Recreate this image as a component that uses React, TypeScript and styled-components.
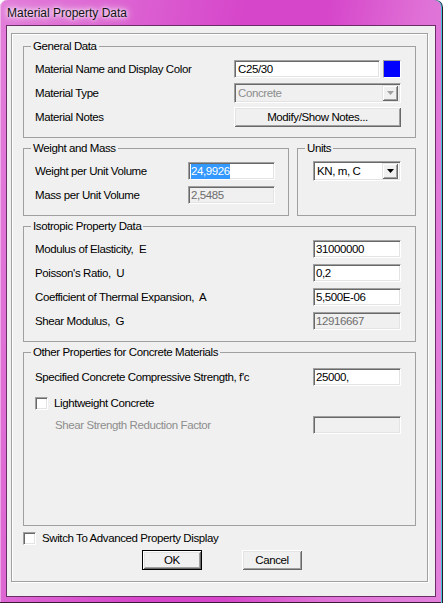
import React from 'react';
import styled, { createGlobalStyle } from 'styled-components';

const GlobalStyle = createGlobalStyle`
  html, body {
    margin: 0;
    padding: 0;
    background: #ffffff;
  }
  body {
    font-family: "Liberation Sans", Arial, sans-serif;
    font-size: 11.5px;
    color: #000;
  }
`;

// window frame
const Window = styled.div`
  width: 443px;
  height: 603px;
  box-sizing: border-box;
  display: flex;
  flex-direction: column;
  border-radius: 7px 7px 0 0;
  overflow: hidden;
  background:
    linear-gradient(100deg, rgba(255, 255, 255, 0.3) 0%, rgba(255, 255, 255, 0.14) 25%, rgba(255, 255, 255, 0) 45%, rgba(255, 255, 255, 0) 60%, rgba(255, 255, 255, 0.24) 78%, rgba(255, 255, 255, 0.32) 100%),
    #d646ca;
  box-shadow: inset -1px 0 0 #2a1a2a, inset -2px 0 0 #46c4d8, inset 0 -1px 0 #3a1a38, inset 1px 0 0 rgba(255, 255, 255, 0.4);
`;

const TitleBar = styled.div`
  height: 25px;
  display: flex;
  align-items: center;
  padding-left: 7px;
  font-size: 12px;
  color: #141414;
`;

const TitleText = styled.span`
  text-shadow: 0 0 6px #fff, 0 0 10px rgba(255, 255, 255, 0.9), 0 0 3px rgba(255, 255, 255, 0.8);
`;

const Client = styled.div`
  flex: 1;
  display: flex;
  margin: 0 7px 6px 6px;
  padding: 7px 7px 14px 4px;
  background: #f0f0f0;
  border: 1px solid #6a2e66;
`;

const Frame = styled.div`
  flex: 1;
  display: flex;
  flex-direction: column;
  padding: 6px 11px 11px 11px;
  border: 1px solid #a0a0a0;
  box-shadow: inset 1px 1px 0 #fff, 1px 1px 0 #fff;
`;

const Groups = styled.div`
  flex: 1;
  display: flex;
  flex-direction: column;
  gap: 4px;
`;

const Group = styled.fieldset<{ $grow?: boolean; $padTop?: number; $padRight?: number; $width?: number }>`
  margin: 0;
  min-width: 0;
  box-sizing: border-box;
  padding: ${p => p.$padTop ?? 4}px ${p => p.$padRight ?? 14}px 8px 11px;
  border: 1px solid #a0a0a0;
  display: flex;
  flex-direction: column;
  ${p => (p.$width ? `width: ${p.$width}px;` : '')}
  ${p => (p.$grow ? 'flex: 1;' : '')}
`;

const Legend = styled.legend`
  margin-left: -4px;
  padding: 0 2px;
  line-height: 13px;
  letter-spacing: -0.4px;
`;

const SplitRow = styled.div`
  display: flex;
  gap: 8px;
`;

const Row = styled.div<{ $end?: boolean }>`
  display: flex;
  align-items: center;
  height: 24px;
  ${p => (p.$end ? 'justify-content: flex-end;' : '')}
`;

const Label = styled.span<{ $disabled?: boolean; $indent?: number }>`
  flex: 1;
  white-space: pre;
  letter-spacing: -0.4px;
  padding-left: ${p => p.$indent ?? 0}px;
  color: ${p => (p.$disabled ? '#8d8d8d' : '#000')};
`;

const Controls = styled.div`
  display: flex;
  align-items: center;
  gap: 3px;
`;

const TextBox = styled.div<{ $width: number; $disabled?: boolean; $pad?: number }>`
  width: ${p => p.$width}px;
  height: 18px;
  box-sizing: border-box;
  display: flex;
  align-items: center;
  padding-left: ${p => p.$pad ?? 2}px;
  background: ${p => (p.$disabled ? '#f0f0f0' : '#fff')};
  color: ${p => (p.$disabled ? '#6d6d6d' : '#000')};
  border-top: 1px solid #a0a0a0;
  border-left: 1px solid #a0a0a0;
  border-right: 1px solid #fff;
  border-bottom: 1px solid #fff;
  box-shadow: inset 1px 1px 0 #696969, inset -1px -1px 0 #e3e3e3;
  letter-spacing: -0.4px;
  white-space: nowrap;
  overflow: hidden;
`;

const Selected = styled.span`
  background: #3399ff;
  color: #fff;
  line-height: 15px;
`;

const Swatch = styled.div`
  width: 18px;
  height: 18px;
  box-sizing: border-box;
  background: #0000ff;
  border-top: 1px solid #a0a0a0;
  border-left: 1px solid #a0a0a0;
  border-right: 1px solid #fff;
  border-bottom: 1px solid #fff;
`;

const Combo = styled.div<{ $width: number; $disabled?: boolean }>`
  width: ${p => p.$width}px;
  height: 20px;
  box-sizing: border-box;
  display: flex;
  align-items: center;
  padding: 2px;
  background: ${p => (p.$disabled ? '#f0f0f0' : '#fff')};
  color: ${p => (p.$disabled ? '#8d8d8d' : '#000')};
  border-top: 1px solid #a0a0a0;
  border-left: 1px solid #a0a0a0;
  border-right: 1px solid #fff;
  border-bottom: 1px solid #fff;
  box-shadow: inset 1px 1px 0 #696969, inset -1px -1px 0 #e3e3e3;
`;

const ComboText = styled.span`
  flex: 1;
  padding-left: 1px;
  letter-spacing: -0.4px;
  white-space: nowrap;
`;

const DropButton = styled.div`
  width: 16px;
  height: 16px;
  box-sizing: border-box;
  display: flex;
  align-items: center;
  justify-content: center;
  background: #f0f0f0;
  box-shadow: inset 1px 1px 0 #e3e3e3, inset -1px -1px 0 #696969, inset 2px 2px 0 #fff, inset -2px -2px 0 #a0a0a0;
`;

const Button = styled.button<{ $width: number; $default?: boolean }>`
  width: ${p => p.$width}px;
  height: 20px;
  box-sizing: border-box;
  margin: 0;
  padding: 0;
  background: #f0f0f0;
  border: ${p => (p.$default ? '1px solid #000' : 'none')};
  box-shadow: inset 1px 1px 0 #fff, inset -1px -1px 0 #696969, inset 2px 2px 0 #e3e3e3, inset -2px -2px 0 #a0a0a0;
  font-family: "Liberation Sans", Arial, sans-serif;
  font-size: 11.5px;
  letter-spacing: -0.4px;
  color: #000;
`;

const CheckRow = styled.label<{ $padTop?: number }>`
  display: flex;
  align-items: center;
  height: 24px;
  box-sizing: border-box;
  gap: 6px;
  padding-top: ${p => p.$padTop ?? 0}px;
  letter-spacing: -0.4px;
`;

const CheckBox = styled.span`
  width: 13px;
  height: 13px;
  box-sizing: border-box;
  background: #fff;
  border-top: 1px solid #a0a0a0;
  border-left: 1px solid #a0a0a0;
  border-right: 1px solid #fff;
  border-bottom: 1px solid #fff;
  box-shadow: inset 1px 1px 0 #696969, inset -1px -1px 0 #e3e3e3;
`;

const ButtonRow = styled.div`
  display: flex;
  justify-content: center;
  gap: 40px;
  height: 20px;
  padding-left: 5px;
`;

const Arrow: React.FC<{ color: string }> = ({ color }) => (
  <svg width="7" height="4" viewBox="0 0 7 4">
    <path d="M0 0h7L3.5 4z" fill={color} />
  </svg>
);

const isotropic = [
  { label: 'Modulus of Elasticity,  E', value: '31000000' },
  { label: "Poisson's Ratio,  U", value: '0,2' },
  { label: 'Coefficient of Thermal Expansion,  A', value: '5,500E-06' },
  { label: 'Shear Modulus,  G', value: '12916667', disabled: true },
];

const App: React.FC = () => (
  <>
    <GlobalStyle />
    <Window>
      <TitleBar>
        <TitleText>Material Property Data</TitleText>
      </TitleBar>
      <Client>
        <Frame>
          <Groups>
            <Group>
              <Legend>General Data</Legend>
              <Row>
                <Label>Material Name and Display Color</Label>
                <Controls>
                  <TextBox $width={146} $pad={3}>C25/30</TextBox>
                  <Swatch />
                </Controls>
              </Row>
              <Row>
                <Label>Material Type</Label>
                <Combo $width={167} $disabled>
                  <ComboText>Concrete</ComboText>
                  <DropButton>
                    <Arrow color="#a0a0a0" />
                  </DropButton>
                </Combo>
              </Row>
              <Row>
                <Label>Material Notes</Label>
                <Button $width={167}>Modify/Show Notes...</Button>
              </Row>
            </Group>

            <SplitRow>
              <Group $width={266} $padRight={13}>
                <Legend>Weight and Mass</Legend>
                <Row>
                  <Label>Weight per Unit Volume</Label>
                  <TextBox $width={87}>
                    <Selected>24,9926</Selected>
                  </TextBox>
                </Row>
                <Row>
                  <Label>Mass per Unit Volume</Label>
                  <TextBox $width={87} $disabled>2,5485</TextBox>
                </Row>
              </Group>
              <Group $grow>
                <Legend>Units</Legend>
                <Row $end>
                  <Combo $width={88}>
                    <ComboText>KN, m, C</ComboText>
                    <DropButton>
                      <Arrow color="#000" />
                    </DropButton>
                  </Combo>
                </Row>
              </Group>
            </SplitRow>

            <Group>
              <Legend>Isotropic Property Data</Legend>
              {isotropic.map(item => (
                <Row key={item.label}>
                  <Label>{item.label}</Label>
                  <TextBox $width={88} $pad={2} $disabled={item.disabled}>
                    {item.value}
                  </TextBox>
                </Row>
              ))}
            </Group>

            <Group $grow $padTop={6}>
              <Legend>Other Properties for Concrete Materials</Legend>
              <Row>
                <Label>Specified Concrete Compressive Strength, f'c</Label>
                <TextBox $width={88} $pad={2}>25000,</TextBox>
              </Row>
              <CheckRow $padTop={4}>
                <CheckBox />
                <span>Lightweight Concrete</span>
              </CheckRow>
              <Row>
                <Label $disabled $indent={20}>Shear Strength Reduction Factor</Label>
                <TextBox $width={88} $disabled />
              </Row>
            </Group>
          </Groups>

          <CheckRow>
            <CheckBox />
            <span>Switch To Advanced Property Display</span>
          </CheckRow>
          <ButtonRow>
            <Button $width={60} $default>OK</Button>
            <Button $width={60}>Cancel</Button>
          </ButtonRow>
        </Frame>
      </Client>
    </Window>
  </>
);

export default App;
